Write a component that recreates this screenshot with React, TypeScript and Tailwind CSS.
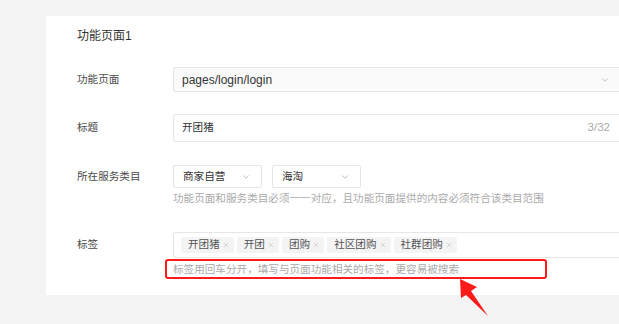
import { ChevronDown, X } from 'lucide-react';

const font = { fontFamily: '"Liberation Sans", "Noto Sans CJK SC", sans-serif' };

const tags = ['开团猪', '开团', '团购', '社区团购', '社群团购'];

function Label({ children }: { children: React.ReactNode }) {
  return <div className="w-[96px] shrink-0 text-[10.6px] text-[#4a4a4a]">{children}</div>;
}

function SmallSelect({ value }: { value: string }) {
  return (
    <div className="w-[89px] h-[23px] border border-[#e6e6e6] rounded-[2px] bg-white flex items-center justify-between pl-[9px] pr-[10px]">
      <span className="text-[10.6px] text-[#333]">{value}</span>
      <ChevronDown size={10} strokeWidth={1.5} className="text-[#999]" />
    </div>
  );
}

export default function App() {
  return (
    <div className="relative w-[619px] h-[324px] overflow-hidden bg-[#f4f4f4] pt-[16px] pl-[46px]" style={font}>
      <div className="w-[600px] h-[279px] bg-white pl-[31px] pt-[10px]">
        <div className="h-[20px] leading-[20px] text-[12px] text-[#333]">功能页面1</div>

        {/* 功能页面 */}
        <div className="flex items-center mt-[21px]">
          <Label>功能页面</Label>
          <div className="w-[448px] h-[25px] border border-[#e6e6e6] rounded-[2px] bg-[#fafafa] flex items-center justify-between pl-[8px] pr-[10px]">
            <span className="text-[12px] text-[#333]">pages/login/login</span>
            <ChevronDown size={10} strokeWidth={1.5} className="text-[#999]" />
          </div>
        </div>

        {/* 标题 */}
        <div className="flex items-center mt-[22px]">
          <Label>标题</Label>
          <div className="w-[448px] h-[28px] border border-[#e6e6e6] rounded-[2px] bg-white flex items-center justify-between pl-[8px] pr-[10px]">
            <span className="text-[10.6px] text-[#333]">开团猪</span>
            <span className="text-[11.5px] text-[#aaa]">3/32</span>
          </div>
        </div>

        {/* 所在服务类目 */}
        <div className="flex items-center mt-[23px]">
          <Label>所在服务类目</Label>
          <div className="flex gap-[10px]">
            <SmallSelect value="商家自营" />
            <SmallSelect value="海淘" />
          </div>
        </div>
        <div className="pl-[96px] mt-[2px] h-[16px] leading-[16px] text-[10.6px] text-[#aaa]">
          功能页面和服务类目必须一一对应，且功能页面提供的内容必须符合该类目范围
        </div>

        {/* 标签 */}
        <div className="flex items-center mt-[26px]">
          <Label>标签</Label>
          <div className="w-[448px] h-[26px] border border-[#e6e6e6] rounded-[2px] bg-white flex items-center gap-[3px] pl-[7px]">
            {tags.map(t => (
              <span key={t} className="h-[16px] bg-[#f4f4f5] rounded-[2px] flex items-center pl-[7px] pr-[4px] gap-[2px] text-[10.6px] text-[#555]">
                {t}
                <X size={8} strokeWidth={1.5} className="text-[#bbb]" />
              </span>
            ))}
          </div>
        </div>
        <div className="pl-[96px] mt-[3px] h-[16px] leading-[16px] text-[10.6px] text-[#aaa]">
          标签用回车分开，填写与页面功能相关的标签，更容易被搜索
        </div>
      </div>

      {/* annotation */}
      <div className="absolute left-[165px] top-[259px] w-[382px] h-[20px] border-[2.5px] border-[#ff1a1a] rounded-[3px]" />
      <svg className="absolute left-0 top-0" width="619" height="324">
        <polygon points="460,279 477,287 471,291 488,316 466,295 461,298" fill="#ff1a1a" />
      </svg>
    </div>
  );
}
